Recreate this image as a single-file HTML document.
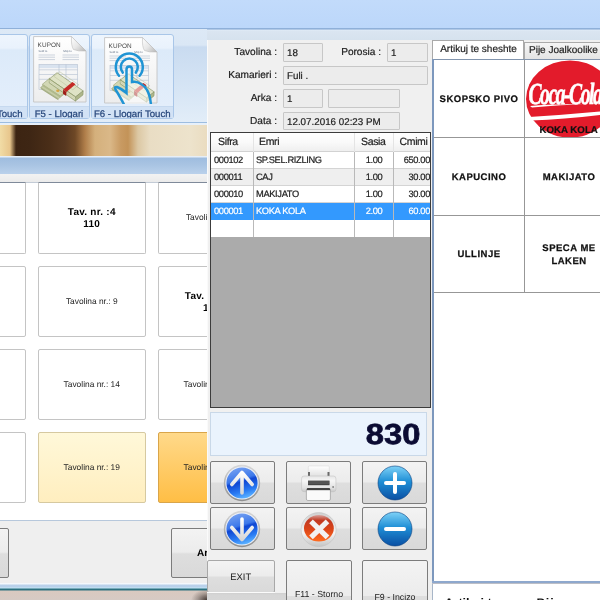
<!DOCTYPE html>
<html><head><meta charset="utf-8">
<style>
*{margin:0;padding:0;box-sizing:border-box}
html,body{width:600px;height:600px;overflow:hidden;background:#bfd9fb;font-family:"Liberation Sans",sans-serif;color:#111;text-rendering:geometricPrecision;-webkit-font-smoothing:antialiased}
.a{position:absolute}
#lp,#mp,#rp{will-change:transform}
#top{left:0;top:0;width:600px;height:40px;background:linear-gradient(#c2dbfb 0,#bcd7fa 27.5px,#8fb0d9 28px,#8fb0d9 29.3px,#e3edf8 29.8px,#dae5f1 31px,#d6e2ee 40px)}
/* left panel */
#lp{left:0;top:28px;width:207px;height:572px;background:#fff;overflow:hidden}
#ribbon{left:0;top:0;width:207px;height:94px;background:linear-gradient(#dde9f6 0px,#dae7f5 16px,#c9dbf0 18px,#d6e5f5 60px,#e2edf8 93px);border-top:1px solid #8fb0d9}
.rb{top:4.5px;height:85.5px;border:1px solid #a9c6e8;border-radius:3px;background:linear-gradient(#eef5fd 0,#e9f2fc 13px,#dceaf9 15px,#e3eefb 70px)}
.rbl{left:0;right:0;bottom:0;height:12px;background:#d2e2f5;border-top:1px solid #c6d9ef;font-size:9.6px;color:#27477c;-webkit-text-stroke:0.25px #27477c;text-align:center;line-height:12px;padding-top:2px;white-space:nowrap;overflow:hidden}
#band1{left:0;top:94px;width:207px;height:3px;background:#e7f0fa;border-top:1px solid #9dbde0}
#brown{left:0;top:97px;width:207px;height:31px;background:linear-gradient(90deg,#f1dca6 0,#e8c68c 10px,#3c2412 16px,#3e2614 30px,#4a2e18 50px,#583820 65px,#6e4826 75px,#b07e4a 85px,#d4b07c 95px,#dab888 110px,#c89a62 121px,#c39358 128px,#dcc8a4 138px,#e9ddc4 150px,#ede3cc 190px,#eadcc0 207px)}
#band2{left:0;top:128px;width:207px;height:19px;background:linear-gradient(#e6eef7 0,#e6eef7 1px,#9fbddf 2px,#a9c4e3 9px,#bad1eb 18px);}
#band3{left:0;top:146px;width:207px;height:8px;background:linear-gradient(#f2f2f2,#ebebeb)}
#band4{left:0;top:153.5px;width:207px;height:1.2px;background:#c3cbd6}
.tb{width:107.5px;height:71px;background:#fff;border:1px solid #c4c4c4;border-radius:2px;font-size:8.4px;text-align:center;display:flex;align-items:center;justify-content:center;line-height:11px;color:#222;white-space:nowrap}
.tb b{display:block;font-size:10px;color:#000;line-height:11.5px;letter-spacing:0.25px;margin-top:2px}
#lbot{left:0;top:492px;width:207px;height:80px;background:#efefef;border-top:1px solid #b7c8dc}
.gbtn{border:1px solid #7c7c7c;border-radius:2px;background:linear-gradient(#f3f3f3 0,#ececec 48%,#dedede 52%,#d9d9d9 100%)}
#lstrip{left:0;top:555px;width:207px;height:17px;background:linear-gradient(#f4f8fc 0,#f4f8fc 1px,#b9d1eb 2px,#b9d1eb 4px,#c4e6f6 5px,#2c7180 6px,#2c7180 7px,#d9c9c0 8px,#d6cac4 17px)}
/* middle panel */
#mp{left:207px;top:40px;width:226px;height:560px;background:#f0f0f0;border-left:1px solid #fafafa}
.lbl{font-size:10.1px;color:#222;-webkit-text-stroke:0.2px #222;text-align:right;white-space:nowrap;margin-top:2.3px}
.fld{background:#ececec;border:1px solid #c7c7c7;border-radius:1px;font-size:9.8px;color:#222;-webkit-text-stroke:0.2px #222;padding-left:3px;line-height:19.5px;white-space:nowrap}
#grid{left:2px;top:92px;width:221px;height:276px;background:#ababab;border:1px solid #3c3c3c;overflow:hidden}
.row{position:absolute;left:0;width:220px;height:17px;font-size:9.3px;letter-spacing:-0.35px;color:#222;-webkit-text-stroke:0.2px currentColor;line-height:17px;border-bottom:1px solid #d4d4d4}
.r1{left:143px;width:40px;text-align:center}
.r2{right:1px;text-align:right}
.row span{position:absolute;top:0;height:17px;white-space:nowrap}
.vl{position:absolute;top:0;width:1px;background:#d0d0d0}
#total{left:2px;top:372px;width:217px;height:44px;background:#eaf3fd;border:1px solid #c9d8e8;}
.mb{width:65px;height:43px}
/* right panel */
#rp{left:432px;top:40px;width:168px;height:560px;background:#f0f0f0}
.tab{height:19px;font-size:10px;line-height:17px;text-align:center;white-space:nowrap;color:#222;-webkit-text-stroke:0.2px #222}
.pb{background:#fff;border:0;padding-top:2px;-webkit-text-stroke:0.25px #111;font-size:9.5px;letter-spacing:0.5px;font-weight:bold;text-align:center;display:flex;align-items:center;justify-content:center;line-height:13px;color:#111}
</style></head><body>
<div id="top" class="a"></div>

<div id="lp" class="a">
  <div id="ribbon" class="a">
    <svg width="0" height="0" style="position:absolute">
      <defs>
        <linearGradient id="pg" x1="0" y1="0" x2="0" y2="1"><stop offset="0" stop-color="#ffffff"/><stop offset="1" stop-color="#ededed"/></linearGradient>
        <linearGradient id="curl" x1="0" y1="0" x2="1" y2="1"><stop offset="0" stop-color="#ffffff"/><stop offset="0.5" stop-color="#e8e8e8"/><stop offset="1" stop-color="#b4b4b4"/></linearGradient>
        <symbol id="kupon" viewBox="0 0 54 67">
          <path d="M0.6 0.6 H38.5 L53 15 V66 H0.6 Z" fill="url(#pg)" stroke="#c4c4c4" stroke-width="0.9"/>
          <path d="M38.5 0.6 Q38 10 40.5 13.5 Q45 15.5 53 15 Z" fill="url(#curl)" stroke="#bdbdbd" stroke-width="0.6"/>
          <text x="4.6" y="10.6" font-size="6.4" fill="#4a4a4a" font-family="Liberation Sans" letter-spacing="0.1">KUPON</text>
          <text x="5.5" y="16.2" font-size="2.8" fill="#5a6a80" font-family="Liberation Sans">Sold to</text>
          <text x="30" y="16.2" font-size="2.8" fill="#5a6a80" font-family="Liberation Sans">Ship to</text>
          <g stroke="#b7c2d0" stroke-width="0.7"><line x1="5.5" y1="19" x2="22" y2="19"/><line x1="5.5" y1="21.2" x2="22" y2="21.2"/><line x1="5.5" y1="23.6" x2="22" y2="23.6"/><line x1="29.5" y1="19" x2="46" y2="19"/><line x1="29.5" y1="21.2" x2="46" y2="21.2"/><line x1="29.5" y1="23.6" x2="46" y2="23.6"/></g>
          <rect x="6" y="28.5" width="38.5" height="3.6" fill="#d9e3ef"/>
          <g fill="none" stroke="#b4c0d0" stroke-width="0.6"><rect x="6" y="28.5" width="38.5" height="25"/><line x1="6" y1="33.8" x2="44.5" y2="33.8"/><line x1="6" y1="38.5" x2="44.5" y2="38.5"/><line x1="6" y1="43.3" x2="44.5" y2="43.3"/><line x1="26" y1="28.5" x2="26" y2="53.5"/><line x1="33" y1="28.5" x2="33" y2="53.5"/></g>
          <g transform="translate(-33.2,-36.7)" stroke-linejoin="round">
            <path d="M40.8 88.2 L48.5 82 L66 93.5 L58.5 99.5 Z" fill="#c6cca6" stroke="#8a9668" stroke-width="0.5"/>
            <path d="M40.8 88.2 L58.5 99.5 L58.5 101 L41 89.8 Z" fill="#a4ad80"/>
            <path d="M42.5 85 L50 78.8 L68 90.5 L60.5 96.7 Z" fill="#d2d7b4" stroke="#8a9668" stroke-width="0.5"/>
            <path d="M42.5 85 L60.5 96.7 L60.5 98.4 L42.6 86.8 Z" fill="#b0b98b"/>
            <ellipse cx="58" cy="91.5" rx="1.6" ry="1.2" fill="#d9a441"/>
            <path d="M57.2 73.4 L83.4 91.6 L75.8 97.6 L49.6 79.6 Z" fill="#dfe3c6" stroke="#7f8c5c" stroke-width="0.6"/>
            <path d="M49.6 79.6 L75.8 97.6 L75.6 101.8 L49.4 83.6 Z" fill="#c3c99f" stroke="#7f8c5c" stroke-width="0.5"/>
            <path d="M75.8 97.6 L83.4 91.6 L83.2 95.6 L75.6 101.8 Z" fill="#aeb68a" stroke="#7f8c5c" stroke-width="0.5"/>
            <g stroke="#eef0e0" stroke-width="0.5"><line x1="49.5" y1="81" x2="75.7" y2="99"/><line x1="49.5" y1="82.4" x2="75.7" y2="100.4"/></g>
            <path d="M54 77 L60 72.5 L79 85.5 L73 90.5 Z" fill="none" stroke="#b8bf98" stroke-width="0.5"/>
            <path d="M72.6 82.6 L75.8 85 L66.6 92.6 L63.4 90.3 Z" fill="#c42a25"/>
            <path d="M63.4 90.3 L66.6 92.6 L66.4 96.8 L63.2 94.5 Z" fill="#9e1c18"/>
          </g>
        </symbol>
      </defs>
    </svg>
    <div class="a rb" style="left:-62px;width:89.5px"><div class="a rbl" style="text-align:right;padding-right:4px">Llogari Touch</div></div>
    <div class="a rb" style="left:28.5px;width:61px">
      <svg class="a" style="left:3.3px;top:1.8px" width="54" height="67"><use href="#kupon"/></svg>
      <div class="a rbl">F5 - Llogari</div>
    </div>
    <div class="a rb" style="left:91px;width:82.5px">
      <svg class="a" style="left:11.5px;top:2px" width="54" height="67"><use href="#kupon"/>
        <g fill="none" stroke="#2094d4" stroke-width="2.5" stroke-linecap="round">
          <path d="M15 38.8 A13.5 13.5 0 1 1 35.6 38.8"/>
          <path d="M18.8 35.6 A8.5 8.5 0 1 1 31.8 35.6"/>
          <path d="M19.8 67 Q15 58 11.5 52.5 Q10 49.5 13 50 Q17 51.5 22.5 56 V32.5 Q22.5 29.5 25.3 29.5 Q28 29.5 28 32.5 V45 Q33 44 37 47 Q41 49 43 53 Q46 58 46.9 67" fill="rgba(255,255,255,0.55)"/>
        </g>
      </svg>
      <div class="a rbl">F6 - Llogari Touch</div>
    </div>
  </div>
  <div id="band1" class="a"></div>
  <div id="brown" class="a"></div>
  <div id="band2" class="a"></div>
  <div id="band3" class="a"></div>
  <div id="band4" class="a"></div>
  <!-- table buttons: rows at y(abs) 183,266,349,432 -> rel 155,238,321,404 -->
  <div class="a tb" style="left:-82px;top:153.5px;height:72.5px;border-top-left-radius:0;border-top-right-radius:0;border-top-color:#7f8a9a"></div>
  <div class="a tb" style="left:38px;top:153.5px;height:72.5px;border-top-left-radius:0;border-top-right-radius:0;border-top-color:#7f8a9a"><b>Tav. nr. :4<br>110</b></div>
  <div class="a tb" style="left:158px;top:153.5px;height:72.5px;border-top-left-radius:0;border-top-right-radius:0;border-top-color:#7f8a9a">Tavolina nr.: 5</div>
  <div class="a tb" style="left:-82px;top:238px"></div>
  <div class="a tb" style="left:38px;top:238px">Tavolina nr.: 9</div>
  <div class="a tb" style="left:158px;top:238px"><b>Tav. nr. :10<br>120</b></div>
  <div class="a tb" style="left:-82px;top:321px"></div>
  <div class="a tb" style="left:38px;top:321px">Tavolina nr.: 14</div>
  <div class="a tb" style="left:158px;top:321px">Tavolina nr.: 15</div>
  <div class="a tb" style="left:-82px;top:404px"></div>
  <div class="a tb" style="left:38px;top:404px;background:linear-gradient(#fff8d9,#ffeebf);border-color:#d6c9a0">Tavolina nr.: 19</div>
  <div class="a tb" style="left:158px;top:404px;background:linear-gradient(#ffd98a,#ffbe45);border-color:#d9a54a">Tavolina nr.: 20</div>
  <div id="lbot" class="a">
    <div class="a gbtn" style="left:-60px;top:7px;width:69px;height:50px"></div>
    <div class="a gbtn" style="left:170.5px;top:7px;width:80px;height:50px;font-weight:bold;font-size:10px;line-height:50px;padding-left:25.5px;color:#000">Ar</div>
  </div>
  <div id="lstrip" class="a"></div>
  <div class="a" style="left:180px;top:562px;width:27px;height:10px;background:radial-gradient(ellipse 16px 11px at 27px 10px,rgba(20,10,5,0.75),rgba(20,10,5,0.25) 60%,rgba(20,10,5,0) 100%)"></div>
</div>

<div id="mp" class="a">
  <div class="a lbl" style="left:0;top:5px;width:69px">Tavolina :</div>
  <div class="a fld" style="left:75px;top:3px;width:40px;height:19px">18</div>
  <div class="a lbl" style="left:120px;top:5px;width:53px">Porosia :</div>
  <div class="a fld" style="left:179px;top:3px;width:41px;height:19px">1</div>
  <div class="a lbl" style="left:0;top:28px;width:69px">Kamarieri :</div>
  <div class="a fld" style="left:75px;top:26px;width:145px;height:19px">Fuli .</div>
  <div class="a lbl" style="left:0;top:51px;width:69px">Arka :</div>
  <div class="a fld" style="left:75px;top:49px;width:40px;height:19px">1</div>
  <div class="a fld" style="left:120px;top:49px;width:72px;height:19px"></div>
  <div class="a lbl" style="left:0;top:74px;width:69px">Data :</div>
  <div class="a fld" style="left:75px;top:72px;width:117px;height:18px">12.07.2016 02:23 PM</div>

  <div id="grid" class="a">
    <div class="row" style="top:0;height:18px;background:linear-gradient(#fefefe,#fafafa 50%,#efefef);font-size:10.5px;line-height:18px;border-bottom:0">
      <span style="left:7px">Sifra</span><span style="left:48px">Emri</span><span style="left:150px">Sasia</span><span style="left:188.5px">Cmimi</span>
    </div>
    <div class="a" style="left:0;top:18px;width:220px;height:1px;background:#d2d2d2"></div>
    <div class="row" style="top:19px;background:#fff"><span style="left:3px">000102</span><span style="left:45px">SP.SEL.RIZLING</span><span class="r1">1.00</span><span class="r2">650.00</span></div>
    <div class="row" style="top:36px;background:#efefef"><span style="left:3px">000011</span><span style="left:45px">CAJ</span><span class="r1">1.00</span><span class="r2">30.00</span></div>
    <div class="row" style="top:53px;background:#fff"><span style="left:3px">000010</span><span style="left:45px">MAKIJATO</span><span class="r1">1.00</span><span class="r2">30.00</span></div>
    <div class="row" style="top:70px;background:#3399fe;color:#fff;border-bottom-color:#3399fe"><span style="left:3px">000001</span><span style="left:45px">KOKA KOLA</span><span class="r1">2.00</span><span class="r2">60.00</span></div>
    <div class="row" style="top:87px;background:#fff;border-bottom:0"></div>
    <div class="vl" style="left:42px;top:0;height:19px;background:#e4e4e4"></div>
    <div class="vl" style="left:143px;top:0;height:19px;background:#e4e4e4"></div>
    <div class="vl" style="left:182.2px;top:0;height:19px;background:#e4e4e4"></div>
    <div class="vl" style="left:42px;top:19px;height:85px;background:#b9b9b9"></div>
    <div class="vl" style="left:143px;top:19px;height:85px;background:#b9b9b9"></div>
    <div class="vl" style="left:182.2px;top:19px;height:85px;background:#b9b9b9"></div>
  </div>

  <div id="total" class="a"><div class="a" style="right:6px;top:6px;font-size:29px;font-weight:bold;color:#0b0b33;line-height:32px;transform:scaleX(1.13);transform-origin:right center;-webkit-text-stroke:0.7px #0b0b33">830</div></div>

  <div class="a gbtn mb" style="left:2px;top:421px">
    <svg class="a" style="left:11px;top:1px" width="40" height="40" viewBox="0 0 40 40">
      <defs>
        <linearGradient id="ring" x1="0" y1="0" x2="0" y2="1"><stop offset="0" stop-color="#d8d8d8"/><stop offset="1" stop-color="#8e8e8e"/></linearGradient>
        <linearGradient id="blu" x1="0.2" y1="0" x2="0.5" y2="1"><stop offset="0" stop-color="#7aa4f2"/><stop offset="0.42" stop-color="#3c78ea"/><stop offset="0.5" stop-color="#0f46d2"/><stop offset="0.8" stop-color="#2a7cf4"/><stop offset="1" stop-color="#5ab0ff"/></linearGradient>
        <linearGradient id="arw" x1="0" y1="0" x2="0" y2="1"><stop offset="0" stop-color="#ffffff"/><stop offset="1" stop-color="#d6d6d6"/></linearGradient>
        <linearGradient id="bl2" x1="0" y1="0" x2="0" y2="1"><stop offset="0" stop-color="#7fd2f7"/><stop offset="0.45" stop-color="#1f8fd6"/><stop offset="1" stop-color="#0a4fa3"/></linearGradient>
        <linearGradient id="red" x1="0" y1="0" x2="0" y2="1"><stop offset="0" stop-color="#d8a09a"/><stop offset="0.2" stop-color="#c23a22"/><stop offset="0.55" stop-color="#dc4518"/><stop offset="1" stop-color="#ff6d22"/></linearGradient>
        <linearGradient id="xring" x1="0" y1="0" x2="0" y2="1"><stop offset="0" stop-color="#d0d0d0"/><stop offset="0.6" stop-color="#f4f4f4"/><stop offset="1" stop-color="#c4c4c4"/></linearGradient>
      </defs>
      <circle cx="20" cy="20" r="18.2" fill="url(#ring)"/>
      <circle cx="20" cy="20" r="16.6" fill="#eef2fa"/>
      <circle cx="20" cy="20" r="15.6" fill="url(#blu)"/>
      <g fill="none" stroke="url(#arw)" stroke-width="3.6" stroke-linecap="round" stroke-linejoin="round">
        <path d="M9.8 21.5 L20 9.5 L30.2 21.5 M20 10.5 V30"/>
      </g>
    </svg>
  </div>
  <div class="a gbtn mb" style="left:78px;top:421px">
    <svg class="a" style="left:12px;top:2px" width="40" height="40" viewBox="0 0 40 40">
      <defs>
        <linearGradient id="pbody" x1="0" y1="0" x2="0" y2="1"><stop offset="0" stop-color="#e6e6e6"/><stop offset="0.3" stop-color="#f6f6f6"/><stop offset="0.75" stop-color="#e2e2e2"/><stop offset="1" stop-color="#c9c9c9"/></linearGradient>
        <linearGradient id="ppap" x1="0" y1="0" x2="0" y2="1"><stop offset="0" stop-color="#ffffff"/><stop offset="1" stop-color="#d9d9d9"/></linearGradient>
      </defs>
      <rect x="9.3" y="2" width="21" height="13" rx="1" fill="url(#ppap)" stroke="#d4d4d4" stroke-width="0.5"/>
      <rect x="9" y="8" width="2" height="7" fill="#6a6a6a"/>
      <rect x="28.5" y="8" width="2" height="7" fill="#6a6a6a"/>
      <rect x="2.6" y="12" width="34.3" height="15.7" rx="2.5" fill="url(#pbody)" stroke="#bdbdbd" stroke-width="0.5"/>
      <rect x="9" y="16.6" width="21.5" height="4.6" fill="#3c3c3c"/>
      <rect x="9" y="17.6" width="21.5" height="0.8" fill="#777"/>
      <rect x="9" y="19.4" width="21.5" height="0.8" fill="#666"/>
      <rect x="7.7" y="24.2" width="23.5" height="2.2" rx="1" fill="#111"/>
      <path d="M7.4 26 H31.4 V35 Q31.4 36.5 30 36.5 H8.8 Q7.4 36.5 7.4 35 Z" fill="#fafafa" stroke="#9a9a9a" stroke-width="0.7"/>
      <rect x="33.5" y="22" width="1.2" height="2" fill="#777"/>
    </svg>
  </div>
  <div class="a gbtn mb" style="left:154px;top:421px">
    <svg class="a" style="left:14px;top:3px" width="36" height="36" viewBox="0 0 36 36">
      <circle cx="18" cy="18" r="17" fill="url(#bl2)" stroke="#0a3f80" stroke-width="0.6"/>
      <rect x="7" y="16" width="22" height="4" rx="2" fill="#fff"/>
      <rect x="16" y="7" width="4" height="22" rx="2" fill="#fff"/>
    </svg>
  </div>
  <div class="a gbtn mb" style="left:2px;top:467px">
    <svg class="a" style="left:11px;top:1px" width="40" height="40" viewBox="0 0 40 40">
      <circle cx="20" cy="20" r="18.2" fill="url(#ring)"/>
      <circle cx="20" cy="20" r="16.6" fill="#eef2fa"/>
      <circle cx="20" cy="20" r="15.6" fill="url(#blu)"/>
      <g fill="none" stroke="url(#arw)" stroke-width="3.6" stroke-linecap="round" stroke-linejoin="round">
        <path d="M9.8 18.5 L20 30.5 L30.2 18.5 M20 29.5 V10"/>
      </g>
    </svg>
  </div>
  <div class="a gbtn mb" style="left:78px;top:467px">
    <svg class="a" style="left:12px;top:1px" width="40" height="40" viewBox="0 0 40 40">
      <ellipse cx="19.6" cy="20.6" rx="17.5" ry="17" fill="url(#xring)" stroke="#bcbcbc" stroke-width="0.5"/>
      <ellipse cx="19.9" cy="19.3" rx="14.9" ry="13.2" fill="url(#red)"/>
      <path d="M10 13.5 L20 17.5 L27 10.5 L30.5 14 L24 20.5 L29.5 27 L25.5 30.5 L19.8 24.5 L13 30 L9.5 26 L15.5 20.5 L10 15 Z" fill="none"/>
      <g stroke="#f2f2f2" stroke-width="5.2" stroke-linecap="butt"><line x1="12" y1="12.3" x2="28.5" y2="28.3"/><line x1="28.5" y1="12.3" x2="12" y2="28.3"/></g>
    </svg>
  </div>
  <div class="a gbtn mb" style="left:154px;top:467px">
    <svg class="a" style="left:14px;top:3px" width="36" height="36" viewBox="0 0 36 36">
      <circle cx="18" cy="18" r="17" fill="url(#bl2)" stroke="#0a3f80" stroke-width="0.6"/>
      <rect x="7" y="16" width="22" height="4" rx="2" fill="#fff"/>
    </svg>
  </div>
  <div class="a gbtn" style="left:-1px;top:520px;width:67.5px;height:32.5px;font-size:9.4px;text-align:center;line-height:32px;color:#222;border-color:#a8a8a8">EXIT</div>
  <div class="a" style="left:-1px;top:552px;width:68px;height:1px;background:#fbfbfb"></div><div class="a" style="left:-1px;top:553px;width:79px;height:20px;background:linear-gradient(#cfcfcf,#d6d6d6 2px,#d8d8d8)"></div>
  <div class="a gbtn" style="left:78px;top:520px;width:66px;height:60px;font-size:8.8px;text-align:center;padding-top:27.5px;line-height:10px;color:#222;background:linear-gradient(#f3f3f3 0,#ececec 60%,#dedede 61%,#d9d9d9 100%)">F11 - Storno<br>Incizo</div>
  <div class="a gbtn" style="left:154px;top:520px;width:66px;height:60px;font-size:8.8px;text-align:center;padding-top:30.5px;line-height:10px;color:#222;background:linear-gradient(#f3f3f3 0,#ececec 60%,#dedede 61%,#d9d9d9 100%)">F9 - Incizo</div>
  <div class="a" style="left:224px;top:0;width:2px;height:560px;background:#b9c7d9"></div>
</div>

<div id="rp" class="a">
  <div class="a" style="left:0;top:19px;width:168px;height:525px;background:#fff"></div>
  <div class="a tab" style="left:0;top:0;width:92px;background:#fff;border:1px solid #a9a9a9;border-bottom:0;height:20px;line-height:18px;padding-left:1px">Artikuj te sheshte</div>
  <div class="a tab" style="left:92px;top:2px;width:90px;height:18px;background:linear-gradient(#f5f5f5,#e3e3e3);border:1px solid #a9a9a9;border-bottom:0;line-height:16px;text-align:left;padding-left:4px">Pije Joalkoolike</div>
  <div class="a" style="left:0;top:19px;width:168px;height:1px;background:#8295ae"></div>
  <div class="a" style="left:0;top:19px;width:2px;height:523px;background:#7d98bd"></div>
  <div class="a" style="left:0;top:541px;width:168px;height:2px;background:#8ea8cd"></div>
  <div class="a" style="left:0;top:543px;width:168px;height:1.5px;background:#bcbec6"></div>
  <div class="a" style="left:0;top:544px;width:1px;height:16px;background:#a8b6c8"></div>
  <div class="a pb" style="left:2px;top:20px;width:90px;height:77px">SKOPSKO PIVO</div>
  <div class="a pb" style="left:92px;top:20px;width:90px;height:77px;overflow:hidden">
    <svg class="a" style="left:0px;top:0px" width="76" height="77" viewBox="0 0 76 77">
      <ellipse cx="46" cy="39" rx="44" ry="38.6" fill="#e31b2b"/>
      <g transform="translate(4.5,44) scale(1.12,1.75)"><text x="0" y="0" font-family="Liberation Serif" font-style="italic" font-weight="bold" font-size="17.5" fill="#fff" stroke="#fff" stroke-width="0.35" letter-spacing="-1.3">Coca-Cola</text></g>
      <path d="M6 46 Q30 43.5 60 44.5 Q40 44.6 8 47.5 Z" fill="#fff"/>
      <path d="M5 57 Q40 55 77 51.5 L77 55 Q40 59.5 7 60.5 Z" fill="#fff"/>
    </svg>
    <span class="a" style="left:15.5px;top:63.5px;font-size:9.7px;color:#111;letter-spacing:0;-webkit-text-stroke:0.2px #111">KOKA KOLA</span>
  </div>
  <div class="a pb" style="left:2px;top:97px;width:90px;height:78px">KAPUCINO</div>
  <div class="a pb" style="left:92px;top:97px;width:90px;height:78px">MAKIJATO</div>
  <div class="a pb" style="left:2px;top:175px;width:90px;height:77px">ULLINJE</div>
  <div class="a pb" style="left:92px;top:175px;width:90px;height:77px">SPECA ME<br>LAKEN</div>
  <div class="a" style="left:2px;top:97px;width:166px;height:1.2px;background:#979797"></div>
  <div class="a" style="left:2px;top:175px;width:166px;height:1.2px;background:#979797"></div>
  <div class="a" style="left:2px;top:252px;width:166px;height:1.2px;background:#979797"></div>
  <div class="a" style="left:91.5px;top:20px;width:1.2px;height:233px;background:#979797"></div>
  <div class="a" style="left:1px;top:544px;width:167px;height:16px;background:#fff;font-size:11px;font-weight:bold;white-space:nowrap;overflow:hidden"><span class="a" style="left:11.5px;top:11.5px;font-size:12.5px;line-height:14px">Artikuj te</span><span class="a" style="left:103.5px;top:11.5px;font-size:12.5px;line-height:14px;letter-spacing:1px">Pije</span></div>
</div>
</body></html>
